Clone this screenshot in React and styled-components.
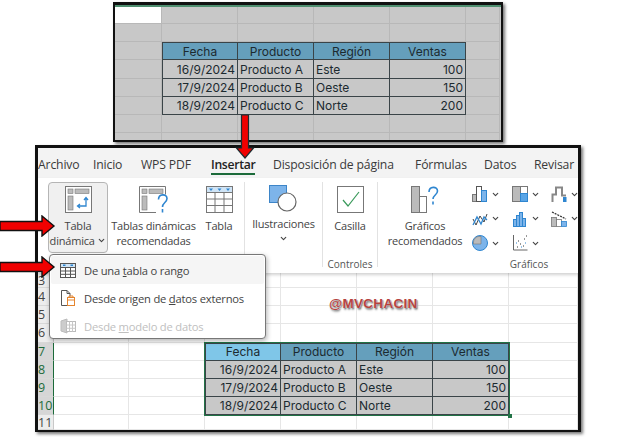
import React from "react";
import styled, { createGlobalStyle } from "styled-components";
import { ChevronDown } from "lucide-react";

const Global = createGlobalStyle`
  html, body { margin: 0; padding: 0; background: #fff; }
  * { box-sizing: border-box; }
`;

const Page = styled.div`
  position: relative;
  width: 640px;
  height: 437px;
  overflow: hidden;
  background: #fff;
  font-family: "Open Sans", "Noto Sans", sans-serif;
  color: #333;
`;

const TopWindow = styled.div`
  margin: 2px 0 0 113px;
  width: 390px;
  height: 140px;
  border: 2.5px solid #111;
  border-top-width: 3px;
  background: #c8c8c8;
  box-shadow: 2px 2px 3px #777;
  overflow: hidden;
`;

const GreenLine = styled.div`
  height: 2px;
  background: #4f8f70;
`;

const LineGrid = styled.div`
  display: grid;
  grid-template-columns: ${(p) => p.$cols};
  grid-template-rows: ${(p) => p.$rows};
  background: ${(p) => p.$bg};
  font-family: "Inter", "Liberation Sans", sans-serif;
  font-size: 12px;
`;

const GridCell = styled.div`
  grid-column: ${(p) => p.$col};
  grid-row: ${(p) => p.$row};
  border-right: 1px solid ${(p) => p.$line};
  border-bottom: 1px solid ${(p) => p.$line};
  background: ${(p) => p.$fill || "transparent"};
`;

const TableCell = styled.div`
  grid-column: ${(p) => p.$col};
  grid-row: ${(p) => p.$row};
  display: flex;
  align-items: center;
  justify-content: ${(p) => p.$align};
  padding: 0 2px;
  white-space: nowrap;
  color: #1c2a30;
  background: ${(p) => p.$fill};
  border-right: 1px solid #3a4448;
  border-bottom: 1px solid #3a4448;
  border-left: ${(p) => (p.$first ? "1px solid #3a4448" : "0")};
  border-top: ${(p) => (p.$top ? "1px solid #3a4448" : "0")};
`;

const MainWindow = styled.div`
  position: relative;
  margin: 3px 0 0 35px;
  width: 546px;
  height: 287px;
  border: 3px solid #111;
  border-bottom-width: 2px;
  background: #fff;
  box-shadow: 2px 2px 3px #777;
`;

const TabBar = styled.div`
  display: grid;
  grid-template-columns: 55px 48px 70px 62px 142px 69px 50px 44px;
  height: 30px;
  padding-top: 6px;
  background: #f3f3f3;
  font-size: 12.2px;
  letter-spacing: -0.15px;
  color: #3a3a3a;
`;

const Tab = styled.span`
  justify-self: start;
  height: 21px;
  line-height: 22px;
  white-space: nowrap;
  font-weight: ${(p) => (p.$active ? 600 : 400)};
  letter-spacing: ${(p) => (p.$active ? "-0.3px" : "inherit")};
  border-bottom: ${(p) => (p.$active ? "2px solid #1c6b3a" : "0")};
  color: ${(p) => (p.$active ? "#222" : "#3a3a3a")};
`;

const Ribbon = styled.div`
  display: flex;
  height: 95px;
  padding-top: 4px;
  background: #fff;
  box-shadow: 0 2px 3px rgba(0, 0, 0, 0.18);
  position: relative;
  z-index: 1;
`;

const Group = styled.div`
  display: flex;
  flex-direction: column;
  flex: none;
  width: ${(p) => p.$w}px;
  height: 85px;
  padding-left: ${(p) => p.$pad || 0}px;
  border-right: ${(p) => (p.$last ? "0" : "1px solid #e2e2e2")};
`;

const GroupBody = styled.div`
  display: flex;
  flex: 1;
  min-height: 0;
  gap: ${(p) => p.$gap || 0}px;
`;

const GroupLabel = styled.div`
  height: 14px;
  line-height: 14px;
  margin-bottom: -4px;
  padding-left: ${(p) => p.$pad || 0}px;
  text-align: center;
  font-size: 10px;
  color: #555;
`;

const RibbonButton = styled.div`
  display: flex;
  flex-direction: column;
  align-items: center;
  flex: none;
  width: ${(p) => p.$w}px;
  height: 71px;
  padding-top: ${(p) => p.$top ?? 3}px;
  border: 1px solid ${(p) => (p.$on ? "#b5b5b5" : "transparent")};
  border-radius: 4px;
  background: ${(p) => (p.$on ? "#f0f0f0" : "transparent")};
  font-size: 11px;
  letter-spacing: -0.2px;
  line-height: 15px;
  text-align: center;
  color: #444;
  svg.big { display: block; flex: none; }
`;

const ButtonLabel = styled.div`
  margin-top: ${(p) => p.$gap ?? 5}px;
  white-space: nowrap;
`;

const ChartGrid = styled.div`
  display: grid;
  flex: none;
  grid-template-columns: repeat(3, 39.5px);
  grid-auto-rows: 24.5px;
  margin-left: 3px;
`;

const ChartCell = styled.div`
  display: flex;
  align-items: center;
  gap: 3px;
  color: #444;
`;

const Sheet = styled.div`
  position: relative;
`;

const RowHead = styled.div`
  grid-column: 1;
  grid-row: ${(p) => p.$row};
  display: flex;
  align-items: center;
  font-size: 12.5px;
  background: ${(p) => (p.$on ? "#d6d6d6" : "#ededed")};
  color: ${(p) => (p.$on ? "#1c6b3a" : "#444")};
  border-right: 1px solid ${(p) => (p.$on ? "#1c6b3a" : "#c8c8c8")};
  border-bottom: 1px solid #d8d8d8;
  font-family: "Open Sans", sans-serif;
`;

const Selection = styled.div`
  grid-column: 4 / 8;
  grid-row: 5 / 9;
  position: relative;
  margin: -1px;
  border: 1.5px solid #217346;
  z-index: 1;
  pointer-events: none;
  &::after {
    content: "";
    position: absolute;
    right: -3px;
    bottom: -3px;
    width: 4px;
    height: 4px;
    background: #217346;
  }
`;

const Watermark = styled.div`
  position: absolute;
  left: 291px;
  top: 23px;
  z-index: 1;
  font-family: "Liberation Sans", sans-serif;
  font-size: 13.5px;
  font-weight: 700;
  letter-spacing: 0.3px;
  color: #b5433f;
  text-shadow: 0 0 1px #fff, 1px 1px 1px #888, 1px 2px 2px #999;
`;

const Menu = styled.div`
  position: absolute;
  left: 11px;
  top: 106px;
  z-index: 3;
  width: 217px;
  height: 85px;
  padding: 1px;
  background: #fff;
  border: 1px solid #777;
  border-radius: 4px;
  box-shadow: 1px 2px 5px rgba(0, 0, 0, 0.3);
`;

const MenuItem = styled.div`
  display: flex;
  align-items: center;
  gap: 8px;
  height: 28px;
  padding-left: 9px;
  font-size: 11.2px;
  letter-spacing: -0.2px;
  white-space: nowrap;
  background: ${(p) => (p.$hover ? "#f5f5f5" : "transparent")};
  color: ${(p) => (p.$off ? "#c0c0c0" : "#444")};
  border-radius: 2px;
`;

const ArrowLayer = styled.svg`
  position: absolute;
  z-index: 4;
  left: ${(p) => p.$x}px;
  top: ${(p) => p.$y}px;
`;

const grey = "#777";
const blue = "#2f86d0";

function PivotIcon() {
  return (
    <svg className="big" width="27" height="27" viewBox="0 0 27 27">
      <rect x=".5" y=".5" width="26" height="26" fill="#fff" stroke={grey} />
      <rect x="3" y="3" width="5" height="4.5" fill="#bbb" stroke={grey} strokeWidth=".6" />
      <rect x="10" y="3" width="14" height="4.5" fill="#bbb" stroke={grey} strokeWidth=".6" />
      <rect x="3" y="10" width="5" height="14" fill="#bbb" stroke={grey} strokeWidth=".6" />
      <path d="M21 12v8h-8M19 14l2-2.5 2 2.5M15 18l-2.500 2 2.500 2" fill="none" stroke={blue} strokeWidth="1.300" />
    </svg>
  );
}

function RecommendedIcon() {
  return (
    <svg className="big" width="30" height="27" viewBox="0 0 30 27">
      <path d="M17 26.500H.5V.5h26v8" fill="#fff" stroke={grey} />
      <rect x="3" y="3" width="5" height="4.500" fill="#bbb" stroke={grey} strokeWidth=".6" />
      <rect x="10" y="3" width="14" height="4.500" fill="#bbb" stroke={grey} strokeWidth=".6" />
      <rect x="3" y="10" width="5" height="14" fill="#bbb" stroke={grey} strokeWidth=".6" />
      <path d="M19.500 13.500c0-6 8.500-6 8.500-1 0 4-4.500 4-4.500 8.500M23.500 23v3.500" fill="none" stroke={blue} strokeWidth="1.600" />
    </svg>
  );
}

function TableIcon() {
  return (
    <svg className="big" width="27" height="27" viewBox="0 0 27 27">
      <rect x=".5" y=".5" width="26" height="26" fill="#fff" stroke={grey} />
      <rect x="1" y="1" width="25" height="5" fill="#cfe4f6" />
      <path d="M3 2.500h4l-2 2.500zM11.500 2.500h4l-2 2.500zM20 2.500h4l-2 2.500z" fill={blue} />
      <path d="M.5 6.500h26M.5 13h26M.5 19.500h26M9 6.500v20M18 6.500v20" stroke={grey} fill="none" />
    </svg>
  );
}

function ShapesIcon() {
  return (
    <svg className="big" width="29" height="27" viewBox="0 0 29 27">
      <rect x=".5" y=".5" width="17" height="17" fill="#7db4ea" stroke="#3d85c8" />
      <circle cx="18" cy="17" r="9" fill="#fff" stroke="#666" strokeWidth="1.200" />
    </svg>
  );
}

function CheckIcon() {
  return (
    <svg className="big" width="27" height="27" viewBox="0 0 27 27">
      <rect x=".5" y=".5" width="26" height="26" fill="#fff" stroke={grey} />
      <path d="M6 14l5 6L22 6" fill="none" stroke="#3a9a5b" strokeWidth="1.200" />
    </svg>
  );
}

function ChartsIcon() {
  return (
    <svg className="big" width="28" height="27" viewBox="0 0 28 27">
      <rect x=".5" y=".5" width="8" height="26" fill="#bbb" stroke={grey} />
      <rect x="8.500" y="10.500" width="7" height="16" fill="#fff" stroke={grey} />
      <path d="M18 6c0-6 8.500-6 8.500-1 0 4-4.500 4-4.500 8M22 15.500v3" fill="none" stroke={blue} strokeWidth="1.600" />
    </svg>
  );
}

const mini = {
  bars: (
    <>
      <rect x=".5" y="8.500" width="4" height="7" fill="#bbb" stroke={grey} />
      <rect x="4.500" y=".5" width="5" height="15" fill="#fff" stroke="#555" />
      <rect x="9.500" y="4.500" width="5" height="11" fill="#7db4ea" stroke={blue} />
    </>
  ),
  tree: (
    <>
      <rect x=".5" y=".5" width="8" height="15" fill="#bbb" stroke={grey} />
      <rect x="8.500" y=".5" width="7" height="7" fill="#fff" stroke={grey} />
      <rect x="8.500" y="7.500" width="7" height="8" fill="#5aa5e6" stroke={blue} />
    </>
  ),
  stair: (
    <>
      <path d="M1.500 16V8.500h3.500V1.500h6v8h4" fill="none" stroke="#888" strokeWidth="2" />
      <rect x="12" y="11" width="3.500" height="5" fill={blue} />
    </>
  ),
  line: (
    <>
      <path d="M1 8l3 6 4-9 4 6 3-8" fill="none" stroke="#444" strokeWidth="1" />
      <path d="M1 14l4-8 4 7 3-7 3 3" fill="none" stroke={blue} strokeWidth="1.300" />
    </>
  ),
  hist: (
    <>
      <rect x="1.500" y="8.500" width="3" height="7" fill="#7db4ea" stroke={blue} />
      <rect x="4.500" y="4.500" width="3" height="11" fill="#7db4ea" stroke={blue} />
      <rect x="7.500" y="1.500" width="3" height="14" fill="#7db4ea" stroke={blue} />
      <rect x="10.500" y="7.500" width="3" height="8" fill="#7db4ea" stroke={blue} />
    </>
  ),
  combo: (
    <>
      <rect x=".5" y="6.500" width="5" height="9" fill="#bbb" stroke={grey} strokeWidth=".8" />
      <rect x="5.500" y="8.500" width="5" height="7" fill="#fff" stroke={grey} strokeWidth=".8" />
      <rect x="10.500" y="10.500" width="5" height="5" fill="#7db4ea" stroke={blue} strokeWidth=".8" />
      <path d="M1 1l6 3 8 4" stroke="#333" strokeWidth="1.300" strokeDasharray="2 1" fill="none" />
    </>
  ),
  pie: (
    <>
      <circle cx="8" cy="8" r="7.500" fill="#7db4ea" stroke={blue} />
      <path d="M9 1.500H7A5.500 5.500 0 0 0 1.500 7v2H9z" fill="#bbb" stroke={grey} strokeWidth=".6" />
    </>
  ),
  scatter: (
    <>
      <path d="M1.500 0v15h14" fill="none" stroke="#666" />
      <path d="M5 12h1M8 9h1M11 11h1M6 6h1M12 4h1M14 1h1" stroke="#333" />
      <path d="M4 8h1M9 12h1M13 8h1" stroke={blue} />
    </>
  ),
};

function MiniChart({ kind }) {
  return (
    <ChartCell>
      <svg width="16" height="16" viewBox="0 0 16 16">{mini[kind]}</svg>
      <ChevronDown size={9} strokeWidth={3} />
    </ChartCell>
  );
}

function PivotRangeIcon() {
  return (
    <svg width="16" height="15" viewBox="0 0 16 15">
      <rect x=".5" y=".5" width="15" height="14" fill="#fff" stroke="#555" />
      <rect x="1" y="1" width="14" height="3" fill="#cfe4f6" />
      <path d="M3 1.500h2.500v1.500H3zM10.500 1.500H13v1.500h-2.500z" fill={blue} />
      <path d="M.5 4.500h15M.5 8h15M.5 11.300h15M5.500 4.500v10M10.500 4.500v10" stroke="#555" fill="none" />
    </svg>
  );
}

function ExternalIcon() {
  return (
    <svg width="16" height="16" viewBox="0 0 16 16">
      <path d="M8 15.500H1.500V.5H7l3 3v3" fill="#fff" stroke="#555" />
      <path d="M7 .5v3h3" fill="none" stroke="#555" />
      <rect x="7.500" y="7.500" width="7" height="8" fill="#fff" stroke="#e5852e" />
      <path d="M7.500 10h7M9 7.500V6h4v1.500" fill="none" stroke="#e5852e" />
    </svg>
  );
}

function ModelIcon() {
  return (
    <svg width="16" height="16" viewBox="0 0 16 16">
      <path d="M1 3l6-2v14l-6-2z" fill="#ccc" stroke="#bbb" />
      <rect x="6.500" y="3.500" width="9" height="10" fill="#fff" stroke="#bbb" />
      <path d="M6.500 7h9M6.500 10.300h9M9.500 3.500v10M12.500 3.500v10" stroke="#c8c8c8" />
    </svg>
  );
}

function SideArrow({ x, y }) {
  return (
    <ArrowLayer $x={x} $y={y} width="56" height="22" viewBox="0 0 56 22">
      <path d="M0 6.500h42V1l12 10-12 10v-5.500H0z" fill="#f00000" stroke="#111" strokeWidth="1.400" />
    </ArrowLayer>
  );
}

function DownArrow() {
  return (
    <ArrowLayer $x={235} $y={114} width="20" height="46" viewBox="0 0 20 46">
      <path d="M6.500 1h7v33h5L10 44 1.500 34h5z" fill="#f00000" stroke="#1d2c30" strokeWidth="1.200" />
    </ArrowLayer>
  );
}

const headers = ["Fecha", "Producto", "Región", "Ventas"];
const rows = [
  ["16/9/2024", "Producto A", "Este", "100"],
  ["17/9/2024", "Producto B", "Oeste", "150"],
  ["18/9/2024", "Producto C", "Norte", "200"],
];
const aligns = ["flex-end", "flex-start", "flex-start", "flex-end"];

// colStart: grid line of the first table column, rowStart: grid line of the header
function DataTable({ colStart, rowStart, active }) {
  return (
    <>
      {headers.map((h, i) => (
        <TableCell
          key={h}
          $col={colStart + i}
          $row={rowStart}
          $align="center"
          $first={i === 0}
          $top
          $fill={active && i === 0 ? "#7fc6e8" : "#659fbc"}
        >
          {h}
        </TableCell>
      ))}
      {rows.map((r, y) =>
        r.map((v, i) => (
          <TableCell
            key={v}
            $col={colStart + i}
            $row={rowStart + 1 + y}
            $align={aligns[i]}
            $first={i === 0}
            $fill="#c8c8c8"
          >
            {v}
          </TableCell>
        ))
      )}
    </>
  );
}

function TopSheet() {
  const colLines = [1, 2, 3, 4, 5, 6];
  const rowLines = [1, 2, 3, 4, 5, 6, 7, 8];
  return (
    <LineGrid $cols="47px 76px 76px 76px 76px 34px" $rows="17px 18px 18px 19px 18px 18px 18px 9px" $bg="#c8c8c8">
      {rowLines.map((r) =>
        colLines.map((c) => (
          <GridCell key={`${r}-${c}`} $row={r} $col={c} $line="#b8b8b8" $fill={r === 1 && c === 1 ? "#fff" : ""} />
        ))
      )}
      <DataTable colStart={2} rowStart={3} />
    </LineGrid>
  );
}

function MainSheet() {
  const sheetRows = [3, 4, 5, 6, 7, 8, 9, 10, 11];
  const cols = [2, 3, 4, 5, 6, 7, 8];
  return (
    <Sheet>
      <Watermark>@MVCHACIN</Watermark>
      <LineGrid
        $cols="16px 75px 76px 76px 76px 76px 76px 69px"
        $rows="15px 18.2px 18.2px 18.2px 18.2px 18.2px 18.2px 18.2px 15px"
        $bg="#fff"
      >
        {sheetRows.map((n, i) => (
          <React.Fragment key={n}>
            <RowHead $row={i + 1} $on={n >= 7 && n <= 10}>{n}</RowHead>
            {cols.map((c) => (
              <GridCell key={c} $row={i + 1} $col={c} $line="#e6e6e6" />
            ))}
          </React.Fragment>
        ))}
        <DataTable colStart={4} rowStart={5} active />
        <Selection />
      </LineGrid>
    </Sheet>
  );
}

export default function App() {
  return (
    <Page>
      <Global />
      <TopWindow>
        <GreenLine />
        <TopSheet />
      </TopWindow>
      <MainWindow>
        <TabBar>
          <Tab>Archivo</Tab>
          <Tab>Inicio</Tab>
          <Tab>WPS PDF</Tab>
          <Tab $active>Insertar</Tab>
          <Tab>Disposición de página</Tab>
          <Tab>Fórmulas</Tab>
          <Tab>Datos</Tab>
          <Tab>Revisar</Tab>
        </TabBar>
        <Ribbon>
          <Group $w={207} $pad={10}>
            <GroupBody $gap={2}>
              <RibbonButton $w={60} $on>
                <PivotIcon />
                <ButtonLabel>
                  Tabla
                  <br />
                  dinámica <ChevronDown size={9} strokeWidth={3} />
                </ButtonLabel>
              </RibbonButton>
              <RibbonButton $w={87}>
                <RecommendedIcon />
                <ButtonLabel>
                  Tablas dinámicas
                  <br />
                  recomendadas
                </ButtonLabel>
              </RibbonButton>
              <RibbonButton $w={40}>
                <TableIcon />
                <ButtonLabel>Tabla</ButtonLabel>
              </RibbonButton>
            </GroupBody>
          </Group>
          <Group $w={78}>
            <GroupBody>
              <RibbonButton $w={77} $top={2}>
                <ShapesIcon />
                <ButtonLabel $gap={4}>
                  Ilustraciones
                  <br />
                  <ChevronDown size={9} strokeWidth={3} />
                </ButtonLabel>
              </RibbonButton>
            </GroupBody>
          </Group>
          <Group $w={55}>
            <GroupBody>
              <RibbonButton $w={54}>
                <CheckIcon />
                <ButtonLabel>Casilla</ButtonLabel>
              </RibbonButton>
            </GroupBody>
            <GroupLabel>Controles</GroupLabel>
          </Group>
          <Group $w={200} $pad={3} $last>
            <GroupBody>
              <RibbonButton $w={88}>
                <ChartsIcon />
                <ButtonLabel>
                  Gráficos
                  <br />
                  recomendados
                </ButtonLabel>
              </RibbonButton>
              <ChartGrid>
                {["bars", "tree", "stair", "line", "hist", "combo", "pie", "scatter"].map((k) => (
                  <MiniChart key={k} kind={k} />
                ))}
              </ChartGrid>
            </GroupBody>
            <GroupLabel $pad={99}>Gráficos</GroupLabel>
          </Group>
        </Ribbon>
        <MainSheet />
        <Menu>
          <MenuItem $hover>
            <PivotRangeIcon />
            <span>
              De una <u>t</u>abla o rango
            </span>
          </MenuItem>
          <MenuItem>
            <ExternalIcon />
            <span>
              Desde origen de <u>d</u>atos externos
            </span>
          </MenuItem>
          <MenuItem $off>
            <ModelIcon />
            <span>
              Desde <u>m</u>odelo de datos
            </span>
          </MenuItem>
        </Menu>
      </MainWindow>
      <SideArrow x={0} y={215} />
      <SideArrow x={0} y={256} />
      <DownArrow />
    </Page>
  );
}
